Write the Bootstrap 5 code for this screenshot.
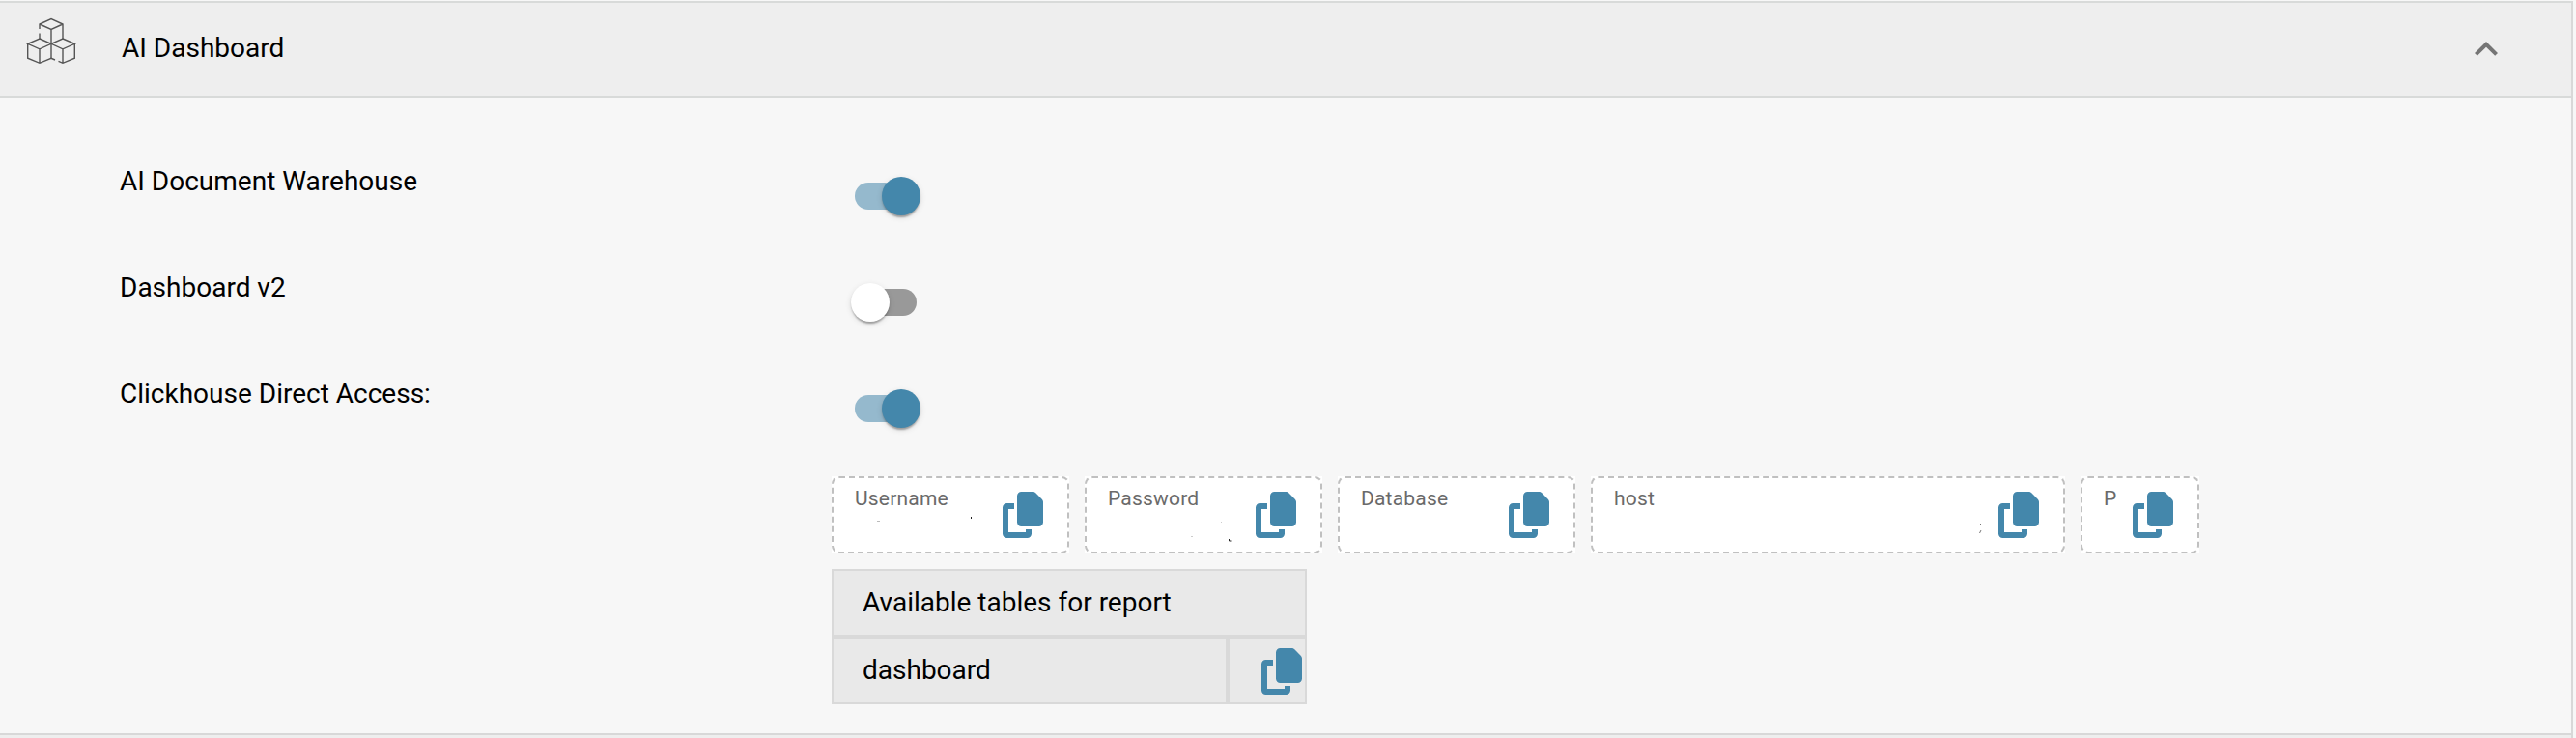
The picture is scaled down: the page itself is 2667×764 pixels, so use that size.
<!DOCTYPE html>
<html lang="en">
<head>
<meta charset="utf-8">
<meta name="viewport" content="width=device-width, initial-scale=1">
<title>AI Dashboard</title>
<link href="https://cdn.jsdelivr.net/npm/bootstrap@5.3.0/dist/css/bootstrap.min.css" rel="stylesheet">
<style>
  body { font-family: Roboto, "Liberation Sans", sans-serif; font-size: 28px; line-height: 40px; color: #000; background: #f7f7f7; height: 764px; overflow: hidden; }
  .panel { width: 2664px; height: 763px; margin-top: 1px; border-right: 2px solid #d8d8d8; }
  .panel-head { height: 100px; background: #eee; border-top: 2px solid #d8dad9; border-bottom: 2px solid #d8dad9; padding: 0 64px 0 24px; }
  .panel-head .cubes { width: 58px; height: 54px; margin-top: 12px; }
  .panel-title { margin: 27px 0 0 44px; }
  .chev { width: 48px; height: 48px; margin-top: 24px; }
  .panel-body { height: 658px; padding: 67px 0 0 124px; }
  .setting { height: 110px; }
  .setting-name { width: 757px; }
  .toggle { width: 72px; height: 40px; margin-top: 15px; padding-left: 4px; position: relative; }
  .toggle .track { width: 64px; height: 28px; border-radius: 14px; background: #999; }
  .toggle .thumb { position: absolute; left: 0; top: 0; width: 40px; height: 40px; border-radius: 50%; background: #fff; box-shadow: 0 4px 2px -2px rgba(0,0,0,.2), 0 2px 2px rgba(0,0,0,.14), 0 2px 6px rgba(0,0,0,.12); }
  .toggle.on .track { background: #95b9cd; }
  .toggle.on .thumb { left: 32px; background: #4487ab; }
  .access { margin: -5px 0 0 737px; }
  .field { width: 246px; height: 80px; background: #fff; border: 2px dashed #c0c0c0; border-radius: 8px; padding: 8px 25px 0 22px; position: relative; }
  .field-box { background: #fff; }
  .field-wide { width: 491px; }
  .field-port { width: 123px; }
  .field span { font-size: 21px; line-height: 26px; letter-spacing: .2px; color: #6a6a6a; }
  .copy { width: 42px; height: 48px; fill: #4487ab; flex: none; }
  .field .copy { margin-top: 6px; }
  .traces { position: absolute; left: -2px; top: -2px; width: 246px; height: 80px; }
  .report { width: 492px; margin-top: 16px; background: #e9e9e9; }
  .cell { height: 70px; border: 2px solid #d9d9d9; padding-left: 30px; padding-top: 13px; }
  .cell-name { width: 410px; }
  .cell-copy { width: 82px; padding: 10px 3px 0 0; }
  .next-head { height: 5px; border-top: 2px solid #d8d8d8; background: #eee; }
</style>
</head>
<body>
<svg class="d-none" xmlns="http://www.w3.org/2000/svg">
  <symbol id="copy" viewBox="0 0 448 512"><path d="M208 0H332.1c12.7 0 24.9 5.1 33.9 14.1l67.9 67.9c9 9 14.1 21.2 14.1 33.9V336c0 26.5-21.5 48-48 48H208c-26.5 0-48-21.5-48-48V48c0-26.5 21.5-48 48-48zM48 128h80v64H64V448H256V416h64v48c0 26.5-21.5 48-48 48H48c-26.5 0-48-21.5-48-48V176c0-26.5 21.5-48 48-48z"/></symbol>
</svg>
<main class="panel">
  <header class="panel-head d-flex align-items-start">
    <svg class="cubes" viewBox="24 15 58 54" fill="none" stroke="#555" stroke-width="1.4">
      <path d="M41 30V25L53 19.6L65 25V40M41 25L53 30.4L65 25M53 30V60.3M41 34.5V40"/>
      <path d="M41 40L53 45.3L41 50.8L28.7 45.3ZM28.7 45.3V60.2L41 65.3L53 60.3L57 62M41 50.8V65.3"/>
      <path d="M65 40L77.3 45.3L65 50.8L53 45.3ZM77.3 45.3V60.2L65 65.3L60.5 63.3M65 50.8V65.3"/>
    </svg>
    <div class="panel-title">AI Dashboard</div>
    <svg class="chev ms-auto" viewBox="0 0 24 24" fill="#757575"><path d="M12 8l-6 6 1.41 1.41L12 10.83l4.59 4.58L18 14z"/></svg>
  </header>
  <section class="panel-body">
    <div class="setting d-flex"><div class="setting-name">AI Document Warehouse</div><div class="toggle on d-flex align-items-center"><div class="track"></div><div class="thumb"></div></div></div>
    <div class="setting d-flex"><div class="setting-name">Dashboard v2</div><div class="toggle d-flex align-items-center"><div class="track"></div><div class="thumb"></div></div></div>
    <div class="setting d-flex"><div class="setting-name">Clickhouse Direct Access:</div><div class="toggle on d-flex align-items-center"><div class="track"></div><div class="thumb"></div></div></div>
    <div class="access">
      <div class="d-flex gap-3">
        <div class="field-box"><div class="field d-flex justify-content-between align-items-start"><span>Username</span><svg class="copy"><use href="#copy"/></svg>
          <svg class="traces"><path d="M47 46.500h3" stroke="#bbb"/><path d="M144.500 42v2" stroke="#222"/></svg></div></div>
        <div class="field-box"><div class="field d-flex justify-content-between align-items-start"><span>Password</span><svg class="copy"><use href="#copy"/></svg>
          <svg class="traces"><path d="M149.500 65v2h3" fill="none" stroke="#222"/><path d="M141 47.500h1M110 62.500h2" stroke="#ccc"/></svg></div></div>
        <div class="field-box"><div class="field d-flex justify-content-between align-items-start"><span>Database</span><svg class="copy"><use href="#copy"/></svg></div></div>
        <div class="field-box"><div class="field field-wide d-flex justify-content-between align-items-start"><span>host</span><svg class="copy"><use href="#copy"/></svg>
          <svg class="traces overflow-visible"><path d="M34.500 50.500h2" stroke="#777"/><path d="M403.500 49v2M404 56l-1.500 3" stroke="#777"/></svg></div></div>
        <div class="field-box"><div class="field field-port d-flex justify-content-between align-items-start"><span>P</span><svg class="copy"><use href="#copy"/></svg></div></div>
      </div>
      <div class="report">
        <div class="cell">Available tables for report</div>
        <div class="d-flex"><div class="cell cell-name">dashboard</div><div class="cell cell-copy d-flex justify-content-end align-items-start"><svg class="copy"><use href="#copy"/></svg></div></div>
      </div>
    </div>
  </section>
  <div class="next-head"></div>
</main>
<script src="https://cdn.jsdelivr.net/npm/bootstrap@5.3.0/dist/js/bootstrap.bundle.min.js"></script>
</body>
</html>
